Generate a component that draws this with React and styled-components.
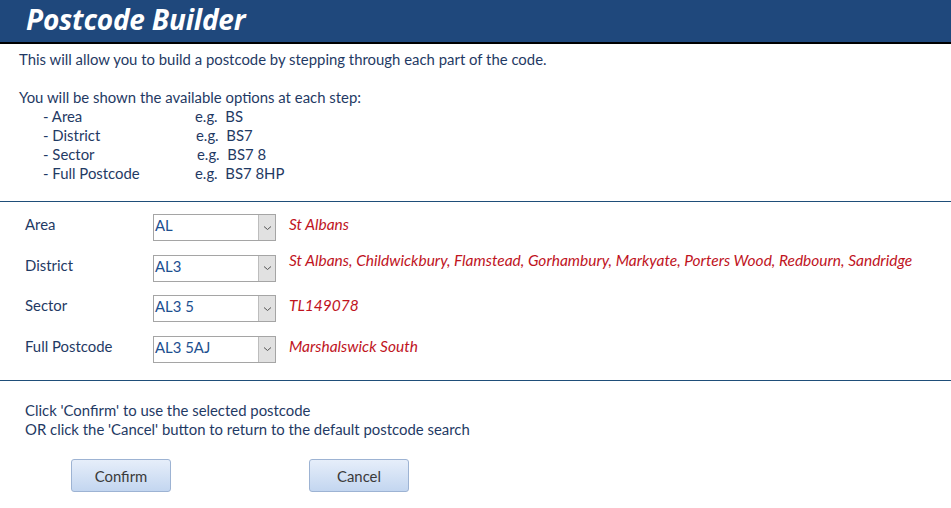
import React from "react";
import styled, { createGlobalStyle } from "styled-components";

const GlobalStyle = createGlobalStyle`
  body {
    margin: 0;
    background: #ffffff;
    font-family: "Lato", "Liberation Sans", sans-serif;
  }
`;

const steps = [
  { name: "- Area", example: "BS", shift: 0 },
  { name: "- District", example: "BS7", shift: 1 },
  { name: "- Sector", example: "BS7 8", shift: 2 },
  { name: "- Full Postcode", example: "BS7 8HP", shift: 0 },
];

const fields = [
  { label: "Area", value: "AL", note: "St Albans" },
  {
    label: "District",
    value: "AL3",
    note: "St Albans, Childwickbury, Flamstead, Gorhambury, Markyate, Porters Wood, Redbourn, Sandridge",
    top: true,
  },
  { label: "Sector", value: "AL3 5", note: "TL149078" },
  { label: "Full Postcode", value: "AL3 5AJ", note: "Marshalswick South" },
];

const Chevron = () => (
  <svg width="9" height="6" viewBox="0 0 9 6">
    <path d="M1 1.5 L4.5 4.5 L8 1.5" fill="none" stroke="#555" strokeWidth="1" />
  </svg>
);

const App = () => {
  return (
    <Page>
      <GlobalStyle />
      <Header>
        <Title>Postcode Builder</Title>
      </Header>
      <Intro>
        <Line>This will allow you to build a postcode by stepping through each part of the code.</Line>
        <Line>&nbsp;</Line>
        <Line>You will be shown the available options at each step:</Line>
        {steps.map((s) => (
          <StepRow key={s.name}>
            <StepName>{s.name}</StepName>
            <StepExample $shift={s.shift}>e.g.&nbsp;&nbsp;{s.example}</StepExample>
          </StepRow>
        ))}
      </Intro>
      <Divider />
      <Form>
        {fields.map((f) => (
          <FieldRow key={f.label}>
            <FieldLabel>{f.label}</FieldLabel>
            <Combo>
              <ComboValue>{f.value}</ComboValue>
              <ComboButton>
                <Chevron />
              </ComboButton>
            </Combo>
            <Note $top={f.top}>{f.note}</Note>
          </FieldRow>
        ))}
      </Form>
      <Divider />
      <Footer>
        <Line>Click 'Confirm' to use the selected postcode</Line>
        <Line>OR click the 'Cancel' button to return to the default postcode search</Line>
        <Buttons>
          <Button>Confirm</Button>
          <Button>Cancel</Button>
        </Buttons>
      </Footer>
    </Page>
  );
};

export default App;

const Page = styled.div`
  width: 951px;
  height: 508px;
  overflow: hidden;
  color: #1f3a64;
  font-size: 14.9px;
`;

const Header = styled.div`
  height: 44px;
  background: #1f487c;
  border-bottom: 2px solid #000;
  display: flex;
  align-items: center;
  padding: 0 0 4px 26px;
  box-sizing: border-box;
`;

const Title = styled.h1`
  margin: 0;
  color: #fff;
  font-family: "Open Sans", "Liberation Sans", sans-serif;
  font-style: italic;
  font-weight: 700;
  font-size: 28px;
  letter-spacing: -0.2px;
`;

const Intro = styled.div`
  padding: 6px 0 0 19px;
  height: 157px;
  box-sizing: border-box;
`;

const Line = styled.div`
  line-height: 19px;
  white-space: nowrap;
`;

const StepRow = styled.div`
  display: grid;
  grid-template-columns: 152px 1fr;
  line-height: 19px;
  padding-left: 24px;
`;

const StepName = styled.span``;

const StepExample = styled.span`
  padding-left: ${(p) => p.$shift}px;
`;

const Divider = styled.hr`
  margin: 0;
  border: none;
  border-top: 1px solid #1f4e79;
  height: 0;
`;

const Form = styled.div`
  display: flex;
  flex-direction: column;
  gap: 13.5px;
  padding: 12px 0 0 25px;
  height: 178px;
  box-sizing: border-box;
`;

const FieldRow = styled.div`
  display: grid;
  grid-template-columns: 128px 123px 1fr;
  align-items: start;
  height: 27px;
`;

const FieldLabel = styled.span`
  line-height: 20px;
`;

const Combo = styled.div`
  display: flex;
  height: 27px;
  border: 1px solid #a5a5a5;
  box-sizing: border-box;
  background: #fff;
`;

const ComboValue = styled.span`
  flex: 1;
  padding-left: 1px;
  line-height: 21px;
  color: #1d4f8f;
`;

const ComboButton = styled.span`
  width: 16px;
  background: #e1e1e1;
  border-left: 1px solid #bdbdbd;
  display: flex;
  align-items: center;
  justify-content: center;
`;

const Note = styled.span`
  margin-left: 13px;
  line-height: 20px;
  font-size: 15.5px;
  color: #c0141e;
  font-style: italic;
  white-space: nowrap;
  margin-top: ${(p) => (p.$top ? "-5px" : "0")};
`;

const Footer = styled.div`
  padding: 20px 0 0 25px;
`;

const Buttons = styled.div`
  display: flex;
  gap: 138px;
  padding: 20px 0 0 46px;
`;

const Button = styled.button`
  width: 100px;
  height: 33px;
  border: 1px solid #9db3d3;
  border-radius: 3px;
  background: linear-gradient(#e6eefa, #c3d6f0);
  color: #3a3a3a;
  font-family: inherit;
  font-size: 14.9px;
  padding: 0;
`;
